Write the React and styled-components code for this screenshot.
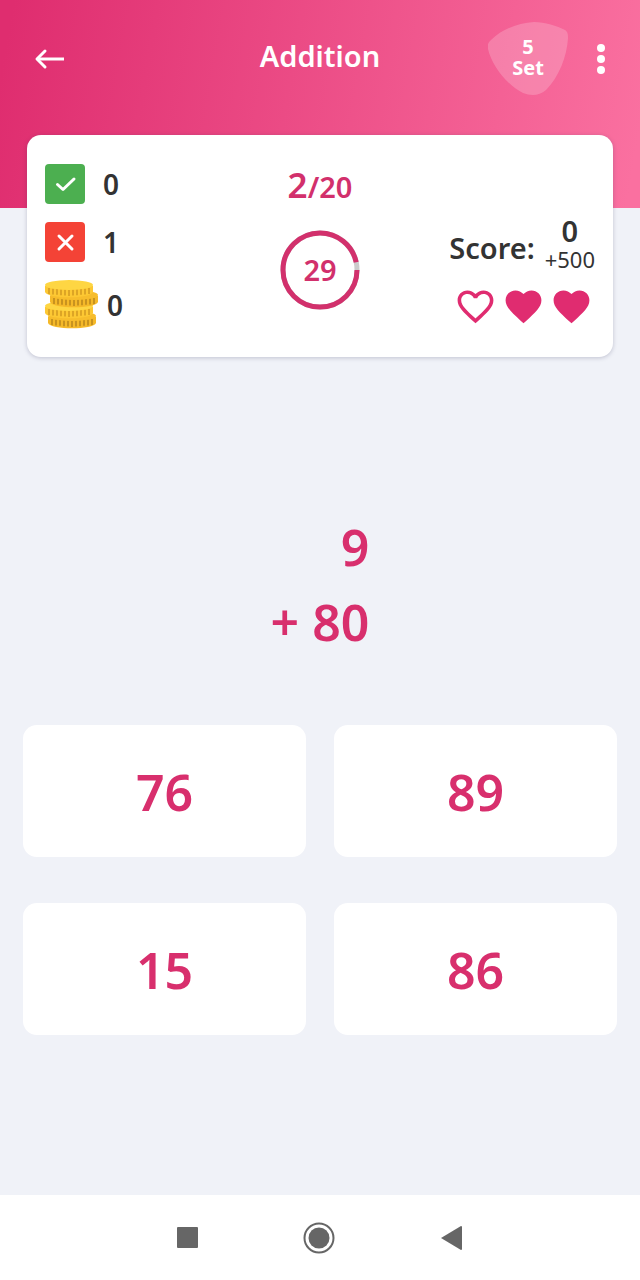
import React from 'react'
import styled, { createGlobalStyle } from 'styled-components'

const GlobalStyle = createGlobalStyle`
    * {
        box-sizing: border-box;
    }
    body {
        margin: 0;
        background: #f0f2f8;
        color: #333333;
        font-family: 'Noto Sans', 'Open Sans', sans-serif;
        font-weight: 600;
    }
    button {
        margin: 0;
        padding: 0;
        border: 0;
        background: none;
        color: inherit;
        font: inherit;
        cursor: pointer;
    }
    svg {
        display: block;
    }
`
const Page = styled.div`
    display: flex;
    flex-direction: column;
    min-height: 100vh;
`
const Header = styled.header`
    display: grid;
    grid-template-columns: 1fr auto 1fr;
    align-items: start;
    height: 208px;
    padding: 22px 20px 0;
    background: linear-gradient(100deg, #df2d6f 2%, #fa70a0 98%);
    color: #ffffff;
`
const BackButton = styled.button`
    display: flex;
    align-items: center;
    justify-self: start;
    height: 73px;
    padding: 0 12px;
`
const Title = styled.h1`
    margin: 0;
    font-size: 29px;
    font-weight: 600;
    line-height: 68px;
`
const Tools = styled.div`
    display: flex;
    align-items: center;
    justify-self: end;
    gap: 14px;
`
const SetBadge = styled.div`
    display: grid;
    place-items: center;
    width: 80px;
    height: 73px;

    > * {
        grid-area: 1 / 1;
    }
`
const SetLabel = styled.span`
    padding-bottom: 4px;
    font-size: 20px;
    font-weight: 700;
    line-height: 21px;
    text-align: center;
`
const MenuButton = styled.button`
    display: grid;
    place-items: center;
    width: 38px;
    height: 73px;
`
const Card = styled.section`
    display: grid;
    grid-template-columns: 1fr auto 1fr;
    margin: -73px 27px 0;
    padding: 29px 18px 27px;
    border-radius: 14px;
    background: #ffffff;
    box-shadow: 0 1px 4px rgba(50, 50, 90, 0.25);
`
const Tally = styled.ul`
    margin: 0;
    padding: 0;
    list-style: none;
`
const TallyRow = styled.li`
    display: flex;
    align-items: center;
    gap: ${(props) => (props.$wide ? '8px' : '18px')};
    height: ${(props) => (props.$wide ? '50px' : '40px')};
    margin-bottom: ${(props) => (props.$wide ? '0' : '18px')};
    font-size: 28px;
    line-height: 40px;
`
const Progress = styled.div`
    display: flex;
    flex-direction: column;
    align-items: center;
    gap: 22px;
    color: #d2306c;
`
const Count = styled.div`
    font-size: 29px;
    line-height: 42px;
`
const Current = styled.span`
    font-size: 35px;
`
const Timer = styled.div`
    display: grid;
    place-items: center;
    font-size: 29px;
    line-height: 40px;

    > * {
        grid-area: 1 / 1;
    }
`
const Result = styled.div`
    display: flex;
    flex-direction: column;
    align-items: flex-end;
    padding-top: 53px;
`
const Score = styled.div`
    display: flex;
    align-items: center;
    gap: 10px;
    font-size: 29px;
`
const ScoreLabel = styled.span`
    padding-top: 4px;
`
const Points = styled.div`
    display: flex;
    flex-direction: column;
    align-items: center;
    line-height: 28px;
`
const Bonus = styled.span`
    font-size: 22px;
    font-weight: 400;
`
const Lives = styled.div`
    display: flex;
    gap: 5px;
    padding: 12px 2px 0 0;
    color: #e02c70;
`
const Question = styled.main`
    flex: 1;
    display: flex;
    flex-direction: column;
    justify-content: flex-end;
`
const Sum = styled.div`
    align-self: center;
    font-size: 50px;
    line-height: 75px;
    text-align: right;
    color: #d82f6d;
`
const Answers = styled.div`
    display: grid;
    grid-template-columns: 1fr 1fr;
    gap: 46px 28px;
    padding: 65px 23px 160px;
`
const Answer = styled.button`
    height: 132px;
    padding-top: 2px;
    border-radius: 14px;
    background: #ffffff;
    color: #d82f6d;
    font-size: 50px;
    font-weight: 600;
`
const NavBar = styled.nav`
    display: flex;
    align-items: center;
    justify-content: center;
    gap: 92px;
    height: 85px;
    padding-right: 2px;
    background: #ffffff;
    color: #666666;
`
const NavButton = styled.button`
    display: grid;
    place-items: center;
    width: 40px;
    height: 40px;
`

const CheckIcon = () => (
    <svg width="40" height="40" viewBox="0 0 40 40">
        <rect width="40" height="40" rx="4" fill="#4caf50" />
        <path
            d="M12.5 20.5l5.5 5L29 15"
            fill="none"
            stroke="#ffffff"
            strokeWidth="3"
            strokeLinecap="round"
            strokeLinejoin="round"
        />
    </svg>
)

const CrossIcon = () => (
    <svg width="40" height="40" viewBox="0 0 40 40">
        <rect width="40" height="40" rx="4" fill="#f44336" />
        <path
            d="M14 14l13 13M27 14L14 27"
            fill="none"
            stroke="#ffffff"
            strokeWidth="3"
            strokeLinecap="round"
        />
    </svg>
)

const coins = [
    { x: 3, y: 31, face: '#f7bd2c', side: '#f5b929', ridge: '#c8931f' },
    { x: 0, y: 21, face: '#fed643', side: '#fdc833', ridge: '#dda525' },
    { x: 5, y: 10, face: '#f7bd2c', side: '#f5b929', ridge: '#c8931f' },
    { x: 0, y: 0, face: '#fed643', side: '#fdc833', ridge: '#dda525' },
]
const ridges = [4, 8, 12, 16, 20, 24, 28, 32, 36, 40, 44]

const CoinsIcon = () => (
    <svg width="54" height="50" viewBox="0 0 54 50">
        {coins.map(({ x, y, face, side, ridge }) => (
            <g key={y} transform={`translate(${x} ${y})`}>
                <path d="M0 6v6c2 7 46 7 48 0V6z" fill={side} />
                {ridges.map((ridge_x) => {
                    const top = 10 - Math.abs(ridge_x - 24) * 0.1
                    return (
                        <path key={ridge_x} d={`M${ridge_x} ${top}v6`} stroke={ridge} strokeWidth="2" />
                    )
                })}
                <ellipse cx="24" cy="5" rx="24" ry="5" fill={face} />
            </g>
        ))}
    </svg>
)

const Heart = ({ empty }) => (
    <svg width="43" height="43" viewBox="0 0 24 24" fill="currentColor">
        {empty ? (
            <path d="M16.5 3c-1.74 0-3.41.81-4.5 2.09C10.91 3.81 9.24 3 7.5 3 4.42 3 2 5.42 2 8.5c0 3.78 3.4 6.86 8.55 11.54L12 21.35l1.45-1.32C18.6 15.36 22 12.28 22 8.5 22 5.42 19.58 3 16.5 3zm-4.4 15.55l-.1.1-.1-.1C7.14 14.24 4 11.39 4 8.5 4 6.5 5.5 5 7.5 5c1.54 0 3.04.99 3.57 2.36h1.87C13.46 5.99 14.96 5 16.5 5c2 0 3.5 1.5 3.5 3.5 0 2.89-3.14 5.74-7.9 10.05z" />
        ) : (
            <path d="M12 21.35l-1.45-1.32C5.4 15.36 2 12.28 2 8.5 2 5.42 4.42 3 7.5 3c1.74 0 3.41.81 4.5 2.09C13.09 3.81 14.76 3 16.5 3 19.58 3 22 5.42 22 8.5c0 3.78-3.4 6.86-8.55 11.54L12 21.35z" />
        )}
    </svg>
)

const App = () => (
    <>
        <GlobalStyle />
        <Page>
            <Header>
                <BackButton aria-label="Back">
                    <svg width="34" height="22" viewBox="0 0 34 22" fill="none" stroke="currentColor" strokeWidth="3">
                        <path d="M5 11h27" />
                        <path d="M13 3L5 11l8 8" strokeLinecap="round" strokeLinejoin="round" />
                    </svg>
                </BackButton>
                <Title>Addition</Title>
                <Tools>
                    <SetBadge>
                        <svg width="80" height="73" viewBox="0 0 80 73">
                            <path
                                d="M3 18C14 7 30 1 46 0c11 0 23 4 31 8 3 2 3 5 3 8-1 18-9 39-22 52-7 6-15 6-23 3C19 63 4 44 0 27c-1-4 0-6 3-9z"
                                fill="#ffffff"
                                fillOpacity="0.2"
                            />
                        </svg>
                        <SetLabel>
                            5<br />
                            Set
                        </SetLabel>
                    </SetBadge>
                    <MenuButton aria-label="Menu">
                        <svg width="8" height="30" viewBox="0 0 8 30" fill="currentColor">
                            <circle cx="4" cy="4" r="4" />
                            <circle cx="4" cy="15" r="4" />
                            <circle cx="4" cy="26" r="4" />
                        </svg>
                    </MenuButton>
                </Tools>
            </Header>
            <Card>
                <Tally>
                    <TallyRow>
                        <CheckIcon />0
                    </TallyRow>
                    <TallyRow>
                        <CrossIcon />1
                    </TallyRow>
                    <TallyRow $wide>
                        <CoinsIcon />0
                    </TallyRow>
                </Tally>
                <Progress>
                    <Count>
                        <Current>2</Current>/20
                    </Count>
                    <Timer>
                        <svg width="80" height="80" viewBox="0 0 80 80" fill="none" strokeWidth="5">
                            <circle cx="40" cy="40" r="37" stroke="#cccccc" />
                            <circle
                                cx="40"
                                cy="40"
                                r="37"
                                stroke="#d2306c"
                                pathLength="30"
                                strokeDasharray="29 1"
                            />
                        </svg>
                        <span>29</span>
                    </Timer>
                </Progress>
                <Result>
                    <Score>
                        <ScoreLabel>Score:</ScoreLabel>
                        <Points>
                            <span>0</span>
                            <Bonus>+500</Bonus>
                        </Points>
                    </Score>
                    <Lives>
                        <Heart empty />
                        <Heart />
                        <Heart />
                    </Lives>
                </Result>
            </Card>
            <Question>
                <Sum>
                    9<br />+ 80
                </Sum>
                <Answers>
                    {[76, 89, 15, 86].map((value) => (
                        <Answer key={value}>{value}</Answer>
                    ))}
                </Answers>
            </Question>
            <NavBar>
                <NavButton aria-label="Recent apps">
                    <svg width="21" height="21" viewBox="0 0 21 21" fill="currentColor">
                        <rect width="21" height="21" rx="1" />
                    </svg>
                </NavButton>
                <NavButton aria-label="Home">
                    <svg width="32" height="32" viewBox="0 0 32 32">
                        <circle cx="16" cy="16" r="14.5" fill="none" stroke="currentColor" strokeWidth="2" />
                        <circle cx="16" cy="16" r="10.5" fill="currentColor" />
                    </svg>
                </NavButton>
                <NavButton aria-label="Go back">
                    <svg width="21" height="24" viewBox="0 0 21 24" fill="currentColor">
                        <path d="M0 12L20 0q1 0 1 1v22q0 1-1 1z" />
                    </svg>
                </NavButton>
            </NavBar>
        </Page>
    </>
)

export default App
